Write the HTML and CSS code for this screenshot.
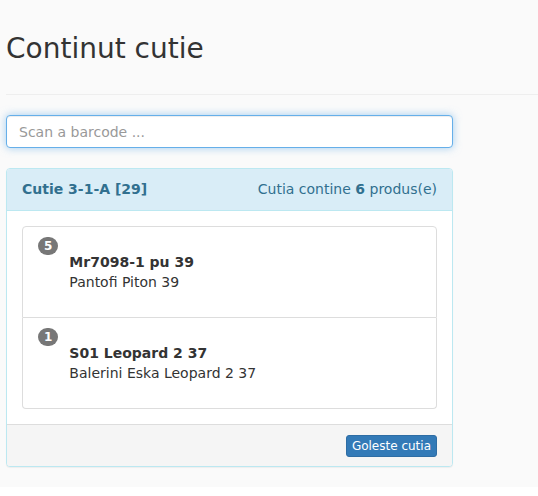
FILE: index.html
```html
<!DOCTYPE html>
<html lang="ro">
<head>
    <meta charset="UTF-8">
    <meta name="viewport" content="width=device-width, initial-scale=1.0">
    <title>Continut cutie</title>
    <link rel="stylesheet" href="styles.css">
</head>
<body>

<div class="page">
    <div class="page-header">
        <h2>Continut cutie</h2>
    </div>

    <input type="text" class="scan-input" placeholder="Scan a barcode ..." autofocus>

    <div class="panel">
        <div class="panel-heading">
            <span class="box-title">Cutie 3-1-A [29]</span>
            <span class="box-count">Cutia contine <b>6</b> produs(e)</span>
        </div>
        <div class="panel-body">
            <ul class="list-group">
                <li class="list-item">
                    <span class="badge">5</span>
                    <div class="item-body">
                        <div class="item-code">Mr7098-1 pu 39</div>
                        <div class="item-name">Pantofi Piton 39</div>
                    </div>
                </li>
                <li class="list-item">
                    <span class="badge">1</span>
                    <div class="item-body">
                        <div class="item-code">S01 Leopard 2 37</div>
                        <div class="item-name">Balerini Eska Leopard 2 37</div>
                    </div>
                </li>
            </ul>
        </div>
        <div class="panel-footer">
            <button type="button" class="btn">Goleste cutia</button>
        </div>
    </div>
</div>

</body>
</html>
```

FILE: styles.css
```css
body {
    font-family: 'DejaVu Sans', sans-serif;
    font-size: 14px;
    line-height: 20px;
    color: #333;
    background-color: #fff;
    margin: 0;
    padding: 0;
}
.page {
    background-color: #fafafa;
    padding: 33px 0 20px 6px;
}
.page-header {
    padding-bottom: 30px;
    border-bottom: 1px solid #eee;
    margin-bottom: 20px;
}
h2 {
    font-size: 28px;
    font-weight: 500;
    line-height: 31px;
    margin: 0;
    color: #333;
}
.scan-input {
    display: block;
    width: 447px;
    height: 33px;
    padding: 6px 12px;
    font-family: inherit;
    font-size: 14px;
    color: #555;
    background-color: #fff;
    border: 1px solid #66afe9;
    border-radius: 4px;
    box-sizing: border-box;
    outline: 0;
    box-shadow: inset 0 1px 1px rgba(0, 0, 0, 0.075), 0 0 8px rgba(102, 175, 233, 0.6);
    margin: 0 0 20px;
}
.scan-input::placeholder {
    color: #999;
}
.panel {
    width: 447px;
    box-sizing: border-box;
    background-color: #fff;
    border: 1px solid #bce8f1;
    border-radius: 4px;
    box-shadow: 0 1px 1px rgba(0, 0, 0, 0.05);
}
.panel-heading {
    display: flex;
    justify-content: space-between;
    padding: 10px 15px 11px;
    color: #31708f;
    background-color: #d9edf7;
    border-bottom: 1px solid #bce8f1;
    border-radius: 3px 3px 0 0;
}
.box-title {
    font-weight: bold;
}
.panel-body {
    padding: 15px;
}
.list-group {
    list-style: none;
    margin: 0;
    padding: 0;
}
.list-item {
    display: flex;
    align-items: flex-start;
    padding: 10px 15px;
    border: 1px solid #ddd;
    background-color: #fff;
}
.list-item:first-child {
    border-radius: 4px 4px 0 0;
}
.list-item + .list-item {
    border-top: none;
    border-radius: 0 0 4px 4px;
}
.badge {
    display: inline-block;
    min-width: 8px;
    padding: 3px 6px;
    font-size: 12px;
    font-weight: bold;
    line-height: 12px;
    color: #fff;
    text-align: center;
    background-color: #777;
    border-radius: 10px;
}
.item-body {
    margin: 15px 0 15px 11px;
}
.item-code {
    font-weight: bold;
}
.panel-footer {
    display: flex;
    justify-content: flex-end;
    padding: 10px 15px 9px;
    background-color: #f5f5f5;
    border-top: 1px solid #ddd;
    border-radius: 0 0 3px 3px;
}
.btn {
    font-family: inherit;
    font-size: 12px;
    line-height: 18px;
    padding: 1px 5px;
    color: #fff;
    background-color: #337ab7;
    border: 1px solid #2e6da4;
    border-radius: 3px;
    cursor: pointer;
}
```
